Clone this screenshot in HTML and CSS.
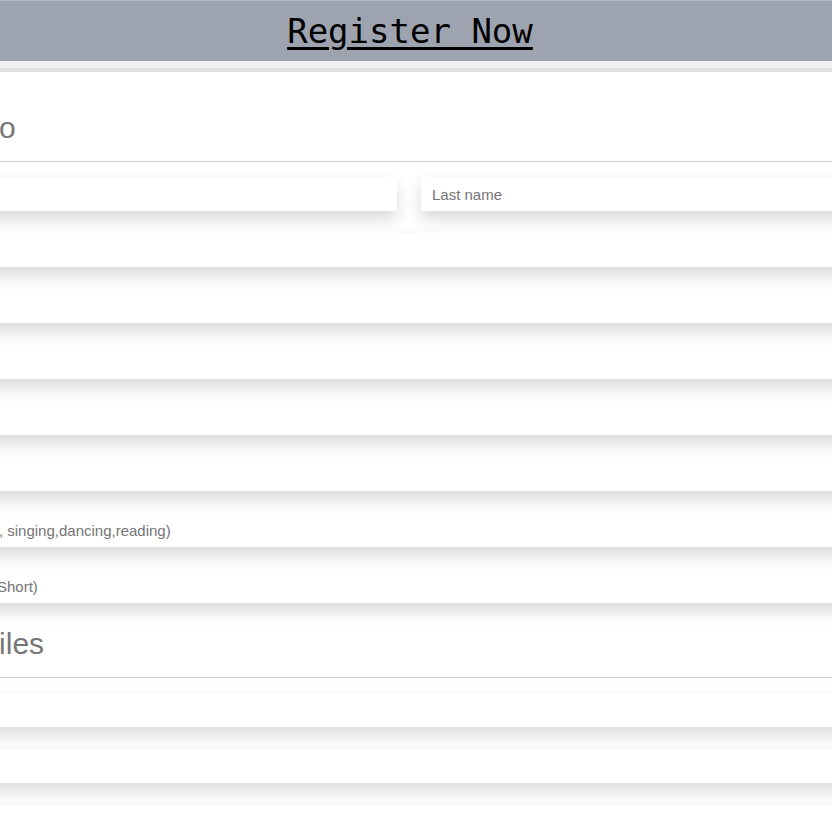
FILE: index.html
```html
<!DOCTYPE html>
<html lang="en">
<head>
<meta charset="utf-8">
<title>Register Now</title>
<link rel="stylesheet" href="styles.css">
</head>
<body>
<header class="topbar">
  <h1 class="topbar-title">Register Now</h1>
</header>
<main class="sheet">
  <form class="form">
    <h2 class="section-title">Contact Info</h2>
    <div class="row-two">
      <input class="field" type="text" placeholder="First name">
      <input class="field" type="text" placeholder="Last name">
    </div>
    <input class="field" type="email" placeholder="Email address">
    <input class="field" type="tel" placeholder="Phone number">
    <input class="field" type="text" placeholder="Date of birth">
    <input class="field" type="text" placeholder="Address">
    <input class="field" type="text" placeholder="City">
    <input class="field" type="text" placeholder="Hobbies (e.g. painting, singing,dancing,reading)">
    <input class="field" type="text" placeholder="Write About Yourself (Short)">
    <h2 class="section-title section-next">Social Profiles</h2>
    <input class="field" type="text" placeholder="Facebook">
    <input class="field" type="text" placeholder="Twitter">
    <input class="field" type="text" placeholder="LinkedIn">
  </form>
</main>
</body>
</html>
```
FILE: styles.css
```css
html, body {
  margin: 0;
  padding: 0;
  overflow: hidden;
  background: #ffffff;
}

body {
  font-family: "Liberation Sans", Arial, sans-serif;
}

.topbar {
  background: #9ea4af;
  border-top: 1px solid #b4b8c0;
  border-bottom: 7px solid #f1f1f1;
  height: 60px;
  display: flex;
  align-items: center;
  justify-content: center;
}

.topbar-title {
  margin: 0 12px 0 0;
  font-family: "DejaVu Sans Mono", monospace;
  font-size: 34px;
  font-weight: normal;
  color: #000;
  text-decoration: underline;
  text-decoration-thickness: 3px;
  text-underline-offset: 4px;
}

.sheet {
  border-top: 4px solid #e0e0e0;
  padding-top: 40px;
}

.form {
  width: 1134px;
  margin-left: -158px;
  display: flex;
  flex-direction: column;
}

.section-title {
  margin: 0 0 15px;
  padding: 0 0 17px 12px;
  font-size: 30px;
  line-height: 32px;
  font-weight: normal;
  color: #777;
  border-bottom: 1px solid #cccccc;
}

.section-next {
  margin-top: 3px;
}

.row-two {
  display: grid;
  grid-template-columns: 1fr 1fr;
  column-gap: 24px;
}

.field {
  display: block;
  box-sizing: border-box;
  width: 100%;
  height: 34px;
  margin: 0 0 22px;
  padding: 0 11px;
  border: none;
  outline: none;
  background: #ffffff;
  font-family: "Liberation Sans", Arial, sans-serif;
  font-size: 15px;
  color: #333;
  box-shadow: 0 8px 16px rgba(0, 0, 0, 0.15);
}

.field::placeholder {
  color: #757575;
}
```
